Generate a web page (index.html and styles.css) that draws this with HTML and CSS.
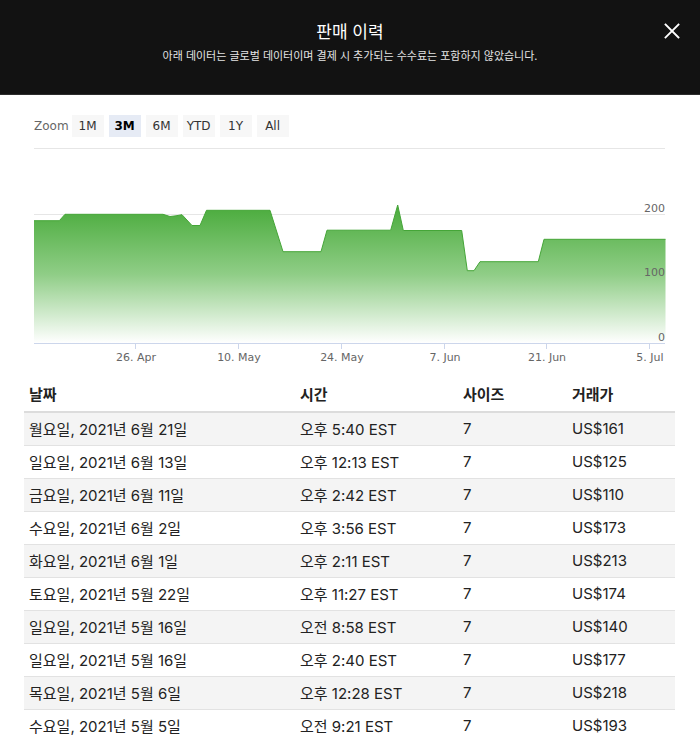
FILE: index.html
```html
<!DOCTYPE html>
<html lang="ko">
<head>
<meta charset="utf-8">
<title>판매 이력</title>
<link rel="stylesheet" href="styles.css">
</head>
<body>
<header class="modal-head">
  <h1 class="title">판매 이력</h1>
  <p class="subtitle">아래 데이터는 글로벌 데이터이며 결제 시 추가되는 수수료는 포함하지 않았습니다.</p>
  <button class="close" aria-label="닫기">
    <svg width="16" height="16" viewBox="0 0 16 16"><path d="M1.5 1.5 L14.5 14.5 M14.5 1.5 L1.5 14.5" stroke="#fff" stroke-width="1.8" stroke-linecap="square"/></svg>
  </button>
</header>

<div class="zoom-row">
  <span class="zoom-label">Zoom</span>
  <button class="zbtn">1M</button>
  <button class="zbtn active">3M</button>
  <button class="zbtn">6M</button>
  <button class="zbtn">YTD</button>
  <button class="zbtn">1Y</button>
  <button class="zbtn">All</button>
</div>

<svg class="chart" width="700" height="235" viewBox="0 140 700 235">
  <defs>
    <linearGradient id="fill" x1="0" y1="205" x2="0" y2="343" gradientUnits="userSpaceOnUse">
      <stop offset="0" stop-color="#49ab3b"/>
      <stop offset="0.5" stop-color="#8fcd86"/>
      <stop offset="1" stop-color="#ffffff"/>
    </linearGradient>
  </defs>
  <g class="grid">
    <line x1="34" y1="148.5" x2="665" y2="148.5"/>
    <line x1="34" y1="214.5" x2="665" y2="214.5"/>
    <line x1="34" y1="278.5" x2="665" y2="278.5"/>
  </g>
  <path d="M34 343 L34 220.7 L59.3 220.7 L65 214.3 L163 214.3 L170 216.5 L176 215.8 L182 214.7 L192 225.5 L200 225.5 L206.5 210.3 L270 210.3 L283 251.7 L321 251.7 L327 230.2 L390.7 230.2 L397.7 205 L403.3 230.5 L461.7 230.5 L467.3 270.7 L474 270.7 L480 261.7 L538.3 261.7 L544 239.3 L665.5 239.3 L665.5 343 Z" fill="url(#fill)"/>
  <path d="M34 220.7 L59.3 220.7 L65 214.3 L163 214.3 L170 216.5 L176 215.8 L182 214.7 L192 225.5 L200 225.5 L206.5 210.3 L270 210.3 L283 251.7 L321 251.7 L327 230.2 L390.7 230.2 L397.7 205 L403.3 230.5 L461.7 230.5 L467.3 270.7 L474 270.7 L480 261.7 L538.3 261.7 L544 239.3 L665.5 239.3" fill="none" stroke="#45a538" stroke-width="1"/>
  <g class="axis">
    <line x1="34" y1="343.5" x2="665" y2="343.5"/>
    <line x1="135.5" y1="343" x2="135.5" y2="349"/>
    <line x1="238.5" y1="343" x2="238.5" y2="349"/>
    <line x1="341.5" y1="343" x2="341.5" y2="349"/>
    <line x1="444.5" y1="343" x2="444.5" y2="349"/>
    <line x1="546.5" y1="343" x2="546.5" y2="349"/>
    <line x1="649.5" y1="343" x2="649.5" y2="349"/>
  </g>
  <g class="ylabels">
    <text x="665" y="212">200</text>
    <text x="665" y="276">100</text>
    <text x="665" y="341">0</text>
  </g>
  <g class="xlabels">
    <text x="136" y="361">26. Apr</text>
    <text x="239" y="361">10. May</text>
    <text x="342" y="361">24. May</text>
    <text x="445" y="361">7. Jun</text>
    <text x="547" y="361">21. Jun</text>
    <text x="650" y="361">5. Jul</text>
  </g>
</svg>

<table class="sales">
  <thead>
    <tr><th class="c1">날짜</th><th class="c2">시간</th><th class="c3">사이즈</th><th class="c4">거래가</th></tr>
  </thead>
  <tbody>
    <tr><td>월요일, 2021년 6월 21일</td><td>오후 5:40 EST</td><td>7</td><td>US$161</td></tr>
    <tr><td>일요일, 2021년 6월 13일</td><td>오후 12:13 EST</td><td>7</td><td>US$125</td></tr>
    <tr><td>금요일, 2021년 6월 11일</td><td>오후 2:42 EST</td><td>7</td><td>US$110</td></tr>
    <tr><td>수요일, 2021년 6월 2일</td><td>오후 3:56 EST</td><td>7</td><td>US$173</td></tr>
    <tr><td>화요일, 2021년 6월 1일</td><td>오후 2:11 EST</td><td>7</td><td>US$213</td></tr>
    <tr><td>토요일, 2021년 5월 22일</td><td>오후 11:27 EST</td><td>7</td><td>US$174</td></tr>
    <tr><td>일요일, 2021년 5월 16일</td><td>오전 8:58 EST</td><td>7</td><td>US$140</td></tr>
    <tr><td>일요일, 2021년 5월 16일</td><td>오후 2:40 EST</td><td>7</td><td>US$177</td></tr>
    <tr><td>목요일, 2021년 5월 6일</td><td>오후 12:28 EST</td><td>7</td><td>US$218</td></tr>
    <tr><td>수요일, 2021년 5월 5일</td><td>오전 9:21 EST</td><td>7</td><td>US$193</td></tr>
  </tbody>
</table>
</body>
</html>
```
FILE: styles.css
```css
* { box-sizing: border-box; }
html, body { margin: 0; padding: 0; background: #fff; }
body {
  font-family: "Inter", "Noto Sans CJK KR", sans-serif;
  color: #222;
  overflow: hidden;
}
.modal-head {
  position: relative;
  height: 95px;
  background: #121212;
  border-bottom: 1px solid #2c2c2c;
  text-align: center;
  color: #fff;
  padding-top: 19px;
}
.title {
  margin: 0;
  font-size: 17px;
  font-weight: 400;
  line-height: 24px;
  font-family: "Noto Sans CJK KR", sans-serif;
}
.subtitle {
  margin: 4px 0 0;
  font-size: 11px;
  line-height: 16px;
  color: #e4e4e4;
  letter-spacing: 0;
  font-family: "Noto Sans CJK KR", sans-serif;
}
.close {
  position: absolute;
  right: 20px;
  top: 23px;
  width: 16px;
  height: 16px;
  padding: 0;
  border: 0;
  background: none;
  display: block;
}
.close svg { display: block; }

.zoom-row {
  display: flex;
  align-items: center;
  gap: 5px;
  margin-top: 20px;
  padding-left: 34px;
  height: 22px;
  font-family: "DejaVu Sans", sans-serif;
  font-size: 12px;
}
.zoom-label { color: #666; margin-right: -2px; }
.zbtn {
  width: 32px;
  height: 22px;
  border: 0;
  padding: 0;
  background: #f7f7f7;
  color: #333;
  font-family: "DejaVu Sans", sans-serif;
  font-size: 12px;
}
.zbtn.active { background: #e6ebf5; color: #000; font-weight: 700; }

.chart { display: block; margin-top: 3px; }
.grid line { stroke: #e6e6e6; stroke-width: 1; }
.axis line { stroke: #ccd6eb; stroke-width: 1; }
.ylabels text { font-family: "DejaVu Sans", sans-serif; font-size: 11px; fill: #666; text-anchor: end; }
.xlabels text { font-family: "DejaVu Sans", sans-serif; font-size: 11px; fill: #666; text-anchor: middle; }

.sales {
  margin: 0 0 0 24px;
  width: 651px;
  border-collapse: collapse;
  font-size: 15px;
}
.sales th {
  text-align: left;
  font-weight: 700;
  height: 37px;
  padding: 0 5px;
  border-bottom: 2px solid #dcdcdc;
  vertical-align: middle;
  font-size: 15px;
}
.sales td {
  height: 33px;
  padding: 0 5px;
  border-bottom: 1px solid #e2e2e2;
  vertical-align: middle;
}
.sales tbody tr:nth-child(odd) { background: #f4f4f4; }
.c1 { width: 271px; }
.c2 { width: 163px; }
.c3 { width: 109px; }
.c4 { width: 108px; }
```
